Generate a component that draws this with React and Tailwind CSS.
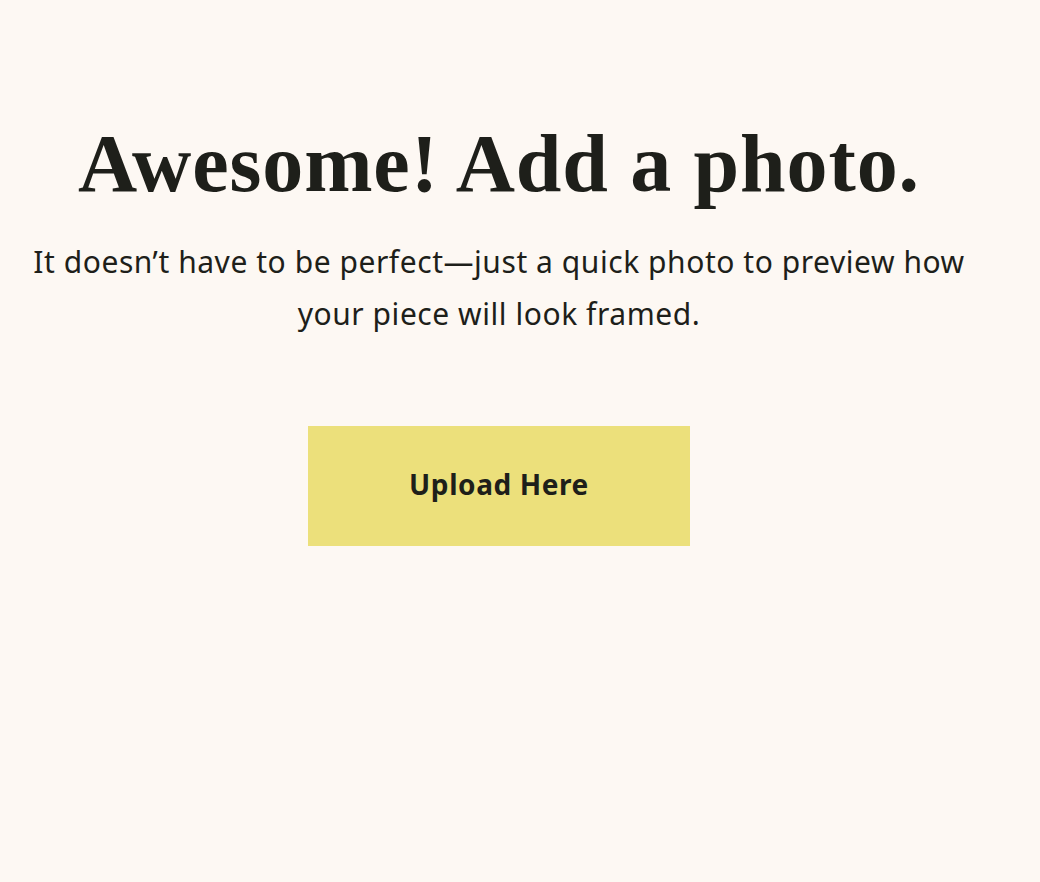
export default function App() {
  return (
    <div className="min-h-screen w-full bg-[#fdf8f3] text-[#1e1f1a]">
      <div className="w-[998px] flex flex-col items-center text-center pt-[114px]">
        <h1 className="font-['Liberation_Serif',serif] text-[82px] leading-[100px] font-bold tracking-[0.9px] whitespace-nowrap">
          Awesome! Add a photo.
        </h1>
        <p className="mt-[22px] font-['Noto_Sans',sans-serif] text-[30px] leading-[52px] tracking-[0.55px]">
          It doesn’t have to be perfect—just a quick photo to preview how
          <br />
          your piece will look framed.
        </p>
        <button className="mt-[86px] w-[382px] h-[120px] bg-[#ece07b] font-['Noto_Sans',sans-serif] text-[28px] leading-[36px] tracking-[0.6px] font-bold pb-[4px]">
          Upload Here
        </button>
      </div>
    </div>
  );
}
